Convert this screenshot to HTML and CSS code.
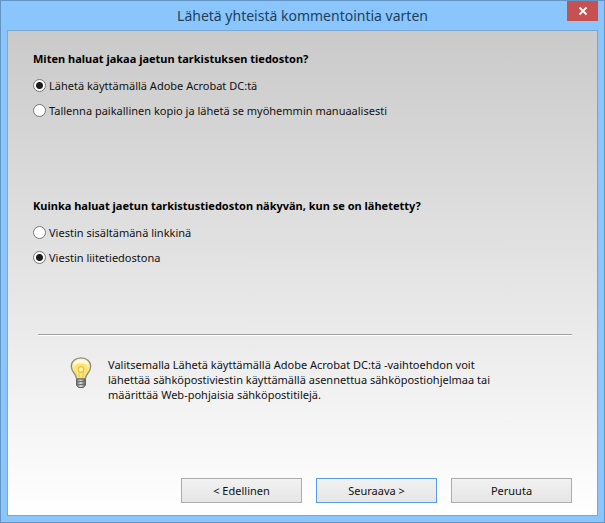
FILE: index.html
```html
<!DOCTYPE html>
<html lang="fi">
<head>
<meta charset="utf-8">
<title>Lähetä yhteistä kommentointia varten</title>
<link rel="stylesheet" href="styles.css">
</head>
<body>
<main class="window">
  <header class="titlebar">
    <h1 class="title">Lähetä yhteistä kommentointia varten</h1>
    <button class="close" type="button" aria-label="Sulje">
      <svg width="10" height="10" viewBox="0 0 10 10" aria-hidden="true"><path d="M1.5 1.5 8.5 8.5M8.5 1.5 1.5 8.5" stroke="#fff" stroke-width="1.8" fill="none"/></svg>
    </button>
  </header>
  <form class="panel">
    <fieldset class="group">
      <legend>Miten haluat jakaa jaetun tarkistuksen tiedoston?</legend>
      <label class="option"><input type="radio" name="delivery" checked><span>Lähetä käyttämällä Adobe Acrobat DC:tä</span></label>
      <label class="option"><input type="radio" name="delivery"><span>Tallenna paikallinen kopio ja lähetä se myöhemmin manuaalisesti</span></label>
    </fieldset>
    <fieldset class="group">
      <legend>Kuinka haluat jaetun tarkistustiedoston näkyvän, kun se on lähetetty?</legend>
      <label class="option"><input type="radio" name="appearance"><span>Viestin sisältämänä linkkinä</span></label>
      <label class="option"><input type="radio" name="appearance" checked><span>Viestin liitetiedostona</span></label>
    </fieldset>
    <hr class="divider">
    <div class="hint">
      <svg class="bulb" width="22" height="32" viewBox="0 0 22 32" aria-hidden="true">
        <defs>
          <radialGradient id="glow" cx="50%" cy="58%" r="58%">
            <stop offset="0" stop-color="#fff3a6"/>
            <stop offset=".5" stop-color="#fae468"/>
            <stop offset="1" stop-color="#fff8c4"/>
          </radialGradient>
          <linearGradient id="metal">
            <stop offset="0" stop-color="#6c6c70"/>
            <stop offset=".45" stop-color="#dcdce0"/>
            <stop offset="1" stop-color="#606064"/>
          </linearGradient>
        </defs>
        <path d="M11 .8C5.400.8 1.300 4.300 1.300 9.300c0 3.200 1.300 5.200 3 7.200 1.500 1.800 2.200 3.300 2.400 5.500h8.600c.2-2.200.9-3.700 2.400-5.500 1.700-2 3-4 3-7.200 0-5-4.100-8.500-9.700-8.500Z" fill="url(#glow)" stroke="#8d897c" stroke-width="1.300"/>
        <path d="M3.500 9c.5-4 3.200-6.200 7.500-6.200s7 2.200 7.500 6.200c-2-2-4.200-2.500-7.500-2.500S5.500 7 3.500 9Z" fill="#fff" opacity=".75"/>
        <path d="M9.500 21.500 8.500 14M12.500 21.500l1-7.500" stroke="#e6c956" fill="none"/>
        <circle cx="11" cy="12.500" r="2.800" fill="#fff3ad" stroke="#e8bd49" stroke-width="1.200"/>
        <path d="M6.500 22h9v6L13.500 30.500h-5L6.500 28Z" fill="url(#metal)" stroke="#626266"/>
        <path d="M6.500 25l9-1M6.500 28l9-1" stroke="#636368" fill="none"/>
      </svg>
      <p>Valitsemalla Lähetä käyttämällä Adobe Acrobat DC:tä -vaihtoehdon voit lähettää sähköpostiviestin käyttämällä asennettua sähköpostiohjelmaa tai määrittää Web-pohjaisia sähköpostitilejä.</p>
    </div>
    <footer class="actions">
      <button class="button" type="button">&lt; Edellinen</button>
      <button class="button primary" type="button">Seuraava &gt;</button>
      <button class="button" type="button">Peruuta</button>
    </footer>
  </form>
</main>
</body>
</html>
```
FILE: styles.css
```css
* {
  box-sizing: border-box;
}

body {
  margin: 0;
  font: 11px/15px "Noto Sans", "Open Sans", sans-serif;
  color: #111;
}

.window {
  display: flex;
  flex-direction: column;
  min-height: 100vh;
  padding: 0 6px 6px;
  border: 1px solid #6295c4;
  background: #8ac6fb;
}

.titlebar {
  position: relative;
  height: 29px;
}

.title {
  margin: 0;
  font-size: 14px;
  font-weight: 400;
  line-height: 29px;
  text-align: center;
  color: #1e3f5e;
}

.close {
  position: absolute;
  top: 0;
  right: 0;
  display: grid;
  place-items: center;
  width: 31px;
  height: 20px;
  padding: 0;
  border: 0;
  background: #c75050;
}

.panel {
  display: flex;
  flex: 1;
  flex-direction: column;
  padding: 20px 25px 12px;
  border: 1px solid #78a8d2;
  background: linear-gradient(#cacaca, #e4e4e4 50%, #fff);
}

.group {
  min-width: 0;
  height: 147px;
  margin: 0;
  padding: 0;
  border: 0;
}

.group legend {
  padding: 0;
  margin-bottom: 7px;
  font-weight: 700;
  color: #000;
}

.option {
  display: flex;
  align-items: center;
  gap: 3px;
  height: 25px;
}

.option input {
  appearance: none;
  width: 13px;
  height: 13px;
  margin: 0;
  border: 1px solid #777;
  border-radius: 50%;
  background: #fff;
}

.option input:checked {
  background: radial-gradient(circle, #1c1c1c 3px, #fff 4px);
}

.divider {
  width: calc(100% - 5px);
  margin: -11px 0 0 5px;
  border: 0;
  border-top: 1px solid #a0a0a0;
  border-bottom: 1px solid #fff;
}

.hint {
  display: flex;
  gap: 16px;
  padding: 21px 70px 0 37px;
}

.bulb {
  flex: none;
}

.hint p {
  margin: 0;
}

.actions {
  display: flex;
  justify-content: flex-end;
  gap: 14px;
  margin-top: auto;
}

.button {
  width: 121px;
  height: 25px;
  padding: 0;
  border: 1px solid #acacac;
  background: linear-gradient(#f1f1f1, #e6e6e6);
  font: inherit;
  color: #111;
}

.primary {
  border-color: #569de5;
}
```
